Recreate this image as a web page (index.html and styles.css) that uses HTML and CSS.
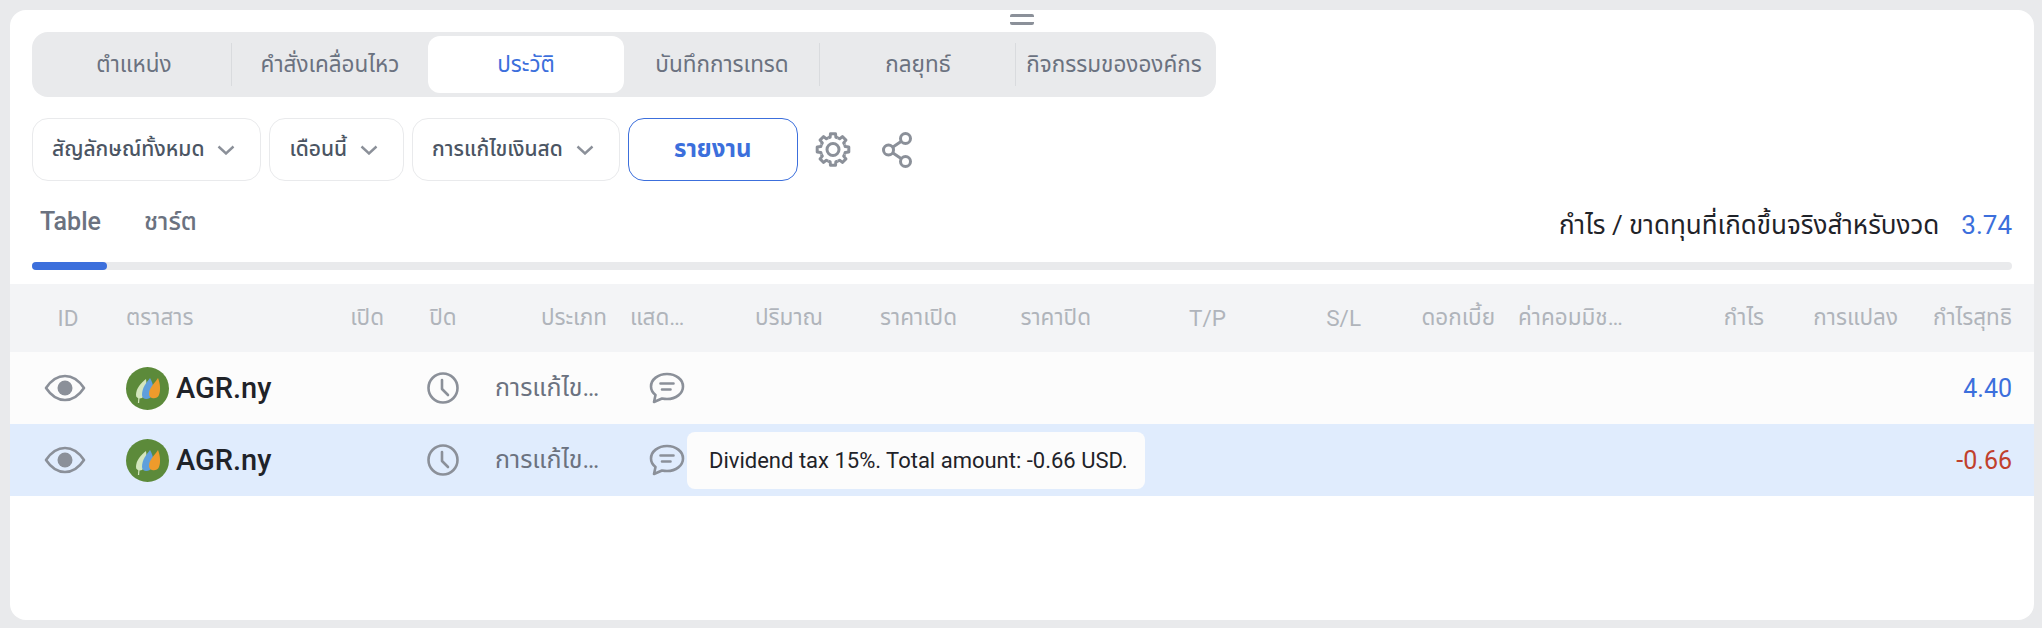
FILE: index.html
```html
<!doctype html>
<html lang="th">
    <head>
        <meta charset="UTF-8" />
        <meta name="viewport" content="width=device-width, initial-scale=1.0" />
        <title>ประวัติ</title>
        <link rel="stylesheet" href="styles.css">
    </head>
    <body>
        <svg class="defs" width="0" height="0">
            <defs>
                <path id="tooth" d="M-4.8 -11.6 A12.5 12.5 0 0 1 -2.9 -12.2 L-2.5 -15.8 L2.5 -15.8 L2.9 -12.2 A12.5 12.5 0 0 1 4.8 -11.6" />
                <g id="eye-icon" fill="none" stroke="#8b9099" stroke-width="2.6">
                    <path d="M2 14 C8 5 15 2 21 2 C27 2 34 5 40 14 C34 23 27 26 21 26 C15 26 8 23 2 14 Z" stroke-linejoin="round" />
                    <circle cx="21" cy="14" r="7.5" fill="#8b9099" stroke="none" />
                </g>
                <g id="clock-icon" fill="none" stroke="#8b9099" stroke-width="2.6" stroke-linecap="round">
                    <ellipse cx="16" cy="16" rx="14.5" ry="14.5" />
                    <path d="M15 8 V17 L21 23" stroke-linejoin="round" />
                </g>
                <g id="comment-icon" fill="none" stroke="#8b9099" stroke-width="2.6" stroke-linecap="round" stroke-linejoin="round">
                    <path d="M18 2 C9 2 2 7.500 2 14.500 C2 18 4 21 6.500 23 L5 30 L13 26.500 C14.500 26.800 16.500 27 18 27 C27 27 34 21.500 34 14.500 C34 7.500 27 2 18 2 Z" />
                    <path d="M11.500 11.500 H24.500 M13 17.500 H21.500" />
                </g>
                <g id="agr-logo">
                    <circle cx="21.500" cy="21.500" r="21.500" fill="#5c8a3a" />
                    <path d="M10 28 C10 21 15 16 20 12 C21 18 21 27 16 31 C13 32 10 31 10 28 Z" fill="#d3e6bd" />
                    <path d="M13 30 L12.500 36" stroke="#d3e6bd" stroke-width="1.200" />
                    <path d="M16 28 C16 21 20 16 24 11 C27 16 29 24 26 29 C23 33 16 33 16 28 Z" fill="#5f9fdc" />
                    <path d="M23 27 C23 21 28 17 32 11 C34 16 35 23 33 28 C31 33 23 32 23 27 Z" fill="#ee9b2c" />
                </g>
            </defs>
        </svg>

        <div class="card">
            <div class="drag-handle"></div>

            <div class="main-tabs">
                <div class="main-tab has-line">ตำแหน่ง</div>
                <div class="main-tab">คำสั่งเคลื่อนไหว</div>
                <div class="main-tab active">ประวัติ</div>
                <div class="main-tab has-line">บันทึกการเทรด</div>
                <div class="main-tab has-line">กลยุทธ์</div>
                <div class="main-tab">กิจกรรมขององค์กร</div>
            </div>

            <div class="toolbar">
                <div class="drop">สัญลักษณ์ทั้งหมด
                    <svg class="chevron" width="18" height="10" viewBox="0 0 18 10"><path d="M1.500 1.500 L9 8.500 L16.500 1.500" /></svg>
                </div>
                <div class="drop">เดือนนี้
                    <svg class="chevron" width="18" height="10" viewBox="0 0 18 10"><path d="M1.500 1.500 L9 8.500 L16.500 1.500" /></svg>
                </div>
                <div class="drop">การแก้ไขเงินสด
                    <svg class="chevron" width="18" height="10" viewBox="0 0 18 10"><path d="M1.500 1.500 L9 8.500 L16.500 1.500" /></svg>
                </div>
                <button class="report-btn">รายงาน</button>
                <svg class="gear" width="38" height="37" viewBox="-19 -18.500 38 37">
                    <use href="#tooth" />
                    <use href="#tooth" transform="rotate(45)" />
                    <use href="#tooth" transform="rotate(90)" />
                    <use href="#tooth" transform="rotate(135)" />
                    <use href="#tooth" transform="rotate(180)" />
                    <use href="#tooth" transform="rotate(225)" />
                    <use href="#tooth" transform="rotate(270)" />
                    <use href="#tooth" transform="rotate(315)" />
                    <circle r="6" />
                </svg>
                <svg class="share" width="30" height="36" viewBox="0 0 30 36">
                    <circle cx="23.500" cy="6.500" r="5" />
                    <circle cx="6.500" cy="18" r="5" />
                    <circle cx="23.500" cy="29.500" r="5" />
                    <path d="M19.400 9.300 L10.600 15.200 M10.600 20.800 L19.400 26.700" />
                </svg>
            </div>

            <div class="view-row">
                <div class="view-tabs">
                    <span class="view-tab">Table</span>
                    <span class="view-tab">ชาร์ต</span>
                </div>
                <div class="period-total">
                    <span>กำไร / ขาดทุนที่เกิดขึ้นจริงสำหรับงวด</span>
                    <span class="blue">3.74</span>
                </div>
            </div>

            <div class="track"><div class="track-fill"></div></div>

            <div class="row head">
                <div class="center">ID</div>
                <div>ตราสาร</div>
                <div class="right">เปิด</div>
                <div class="close-cell">ปิด</div>
                <div class="right">ประเภท</div>
                <div class="note-cell">แสดงความคิดเห็น</div>
                <div class="right">ปริมาณ</div>
                <div class="right">ราคาเปิด</div>
                <div class="right">ราคาปิด</div>
                <div class="right">T/P</div>
                <div class="right">S/L</div>
                <div class="right">ดอกเบี้ย</div>
                <div class="fee-cell">ค่าคอมมิชชั่น</div>
                <div class="right">กำไร</div>
                <div class="right">การแปลง</div>
                <div class="right">กำไรสุทธิ</div>
            </div>

            <div class="row item">
                <div class="center"><svg class="eye" width="42" height="28" viewBox="0 0 42 28"><use href="#eye-icon" /></svg></div>
                <div class="symbol"><svg width="43" height="43" viewBox="0 0 43 43"><use href="#agr-logo" /></svg>AGR.ny</div>
                <div></div>
                <div class="close-cell"><svg width="32" height="32" viewBox="0 0 32 32"><use href="#clock-icon" /></svg></div>
                <div class="type-cell">การแก้ไขเงินสด</div>
                <div class="note-cell"><svg class="comment" width="36" height="32" viewBox="0 0 36 32"><use href="#comment-icon" /></svg></div>
                <div></div><div></div><div></div><div></div><div></div><div></div><div></div><div></div><div></div>
                <div class="right amount blue">4.40</div>
            </div>

            <div class="row item selected">
                <div class="center"><svg class="eye" width="42" height="28" viewBox="0 0 42 28"><use href="#eye-icon" /></svg></div>
                <div class="symbol"><svg width="43" height="43" viewBox="0 0 43 43"><use href="#agr-logo" /></svg>AGR.ny</div>
                <div></div>
                <div class="close-cell"><svg width="32" height="32" viewBox="0 0 32 32"><use href="#clock-icon" /></svg></div>
                <div class="type-cell">การแก้ไขเงินสด</div>
                <div class="note-cell"><svg class="comment" width="36" height="32" viewBox="0 0 36 32"><use href="#comment-icon" /></svg></div>
                <div></div><div></div><div></div><div></div><div></div><div></div><div></div><div></div><div></div>
                <div class="right amount red">-0.66</div>
                <div class="tooltip">Dividend tax 15%. Total amount: -0.66 USD.</div>
            </div>
        </div>
    </body>
</html>
```

FILE: styles.css
```css
:root {
    --blue: #3c6fdc;
    --grey: #6b7280;
    --icon: #8b9099;
    --line: #e9eaec;
}
* {
    box-sizing: border-box;
}
body {
    background: #e9eaec;
    font-family: Roboto, "Noto Sans Thai", "Noto Sans", sans-serif;
    margin: 0;
    padding: 10px 8px 8px 10px;
    height: 628px;
    overflow: hidden;
}
.defs {
    display: block;
    height: 0;
}
.card {
    background: white;
    border-radius: 16px;
    height: 610px;
    padding-top: 22px;
    position: relative;
}
.drag-handle {
    position: absolute;
    left: 1000px;
    top: 4px;
    width: 24px;
    height: 11px;
    border-top: 3px solid var(--icon);
    border-bottom: 3px solid var(--icon);
    border-radius: 2px;
}

/* main tabs */
.main-tabs {
    display: flex;
    width: 1184px;
    height: 65px;
    margin-left: 22px;
    padding: 4px;
    background: var(--line);
    border-radius: 16px;
}
.main-tab {
    width: 196px;
    display: flex;
    align-items: center;
    justify-content: center;
    color: var(--grey);
    font-size: 22.500px;
    position: relative;
    white-space: nowrap;
}
.main-tab.has-line::after {
    content: "";
    position: absolute;
    right: 0;
    top: 7px;
    bottom: 7px;
    width: 1px;
    background: #d9dbde;
}
.main-tab.active {
    background: white;
    border-radius: 12px;
    color: var(--blue);
}

/* filters */
.toolbar {
    display: flex;
    align-items: center;
    gap: 8px;
    height: 63px;
    margin: 21px 0 0 22px;
}
.drop {
    height: 63px;
    display: flex;
    align-items: center;
    gap: 13px;
    padding: 0 25px 0 19px;
    border: 1px solid var(--line);
    border-radius: 16px;
    color: #4b5563;
    font-size: 21px;
    font-weight: 500;
    white-space: nowrap;
}
.chevron {
    fill: none;
    stroke: var(--icon);
    stroke-width: 2.4;
}
.report-btn {
    width: 170px;
    height: 63px;
    background: white;
    border: 1.500px solid var(--blue);
    border-radius: 16px;
    color: var(--blue);
    font-family: inherit;
    font-size: 24px;
    font-weight: 700;
}
.gear {
    margin-left: 8px;
    fill: none;
    stroke: var(--icon);
    stroke-width: 3;
    stroke-linejoin: round;
}
.share {
    margin-left: 22px;
    fill: none;
    stroke: var(--icon);
    stroke-width: 3;
}

/* table / chart switch */
.view-row {
    display: flex;
    justify-content: space-between;
    height: 81px;
    padding: 24px 22px 0 30px;
}
.view-tabs {
    display: flex;
    gap: 43px;
}
.view-tab {
    color: var(--grey);
    font-size: 25px;
    font-weight: 500;
    line-height: 34px;
}
.period-total {
    display: flex;
    gap: 22px;
    color: #1f2329;
    font-size: 26px;
    line-height: 40px;
}
.blue {
    color: var(--blue);
}
.red {
    color: #c0402c;
}
.track {
    height: 8px;
    margin: 0 22px;
    background: var(--line);
    border-radius: 4px;
}
.track-fill {
    width: 75px;
    height: 8px;
    background: var(--blue);
    border-radius: 4px;
}

/* table */
.row {
    display: grid;
    grid-template-columns: 116px 164px 94px 111px 112px 83px 133px 134px 134px 135px 135px 134px 145px 124px 134px 114px;
    padding-right: 22px;
    align-items: center;
    position: relative;
}
.row > div {
    min-width: 0;
    white-space: nowrap;
}
.head {
    height: 68px;
    margin-top: 14px;
    background: #f3f4f6;
    color: #b0b4bb;
    font-size: 22.500px;
}
.item {
    height: 72px;
    background: #fcfcfc;
    color: var(--grey);
    font-size: 25px;
}
.item.selected {
    background: #e0ecfd;
}
.center {
    text-align: center;
}
.right {
    text-align: right;
}
.close-cell {
    padding-left: 7px;
    text-align: center;
}
.note-cell {
    padding-left: 23px;
    overflow: hidden;
    text-overflow: ellipsis;
}
.fee-cell {
    padding: 0 15px 0 23px;
    overflow: hidden;
    text-overflow: ellipsis;
}
.type-cell {
    padding-right: 4px;
    overflow: hidden;
    text-overflow: ellipsis;
}
.eye {
    display: block;
    margin-left: 34px;
}
.comment {
    display: block;
    margin-left: 19px;
}
.close-cell svg {
    display: block;
    margin: 0 auto;
}
.symbol {
    display: flex;
    align-items: center;
    gap: 7px;
    color: #1f2329;
    font-size: 29px;
    font-weight: 500;
}
.amount {
    font-size: 25px;
}
.tooltip {
    position: absolute;
    left: 677px;
    top: 8px;
    width: 458px;
    height: 57px;
    padding-left: 22px;
    background: #fcfcfc;
    border-radius: 8px;
    color: #1f2329;
    font-size: 22px;
    line-height: 57px;
}
```
